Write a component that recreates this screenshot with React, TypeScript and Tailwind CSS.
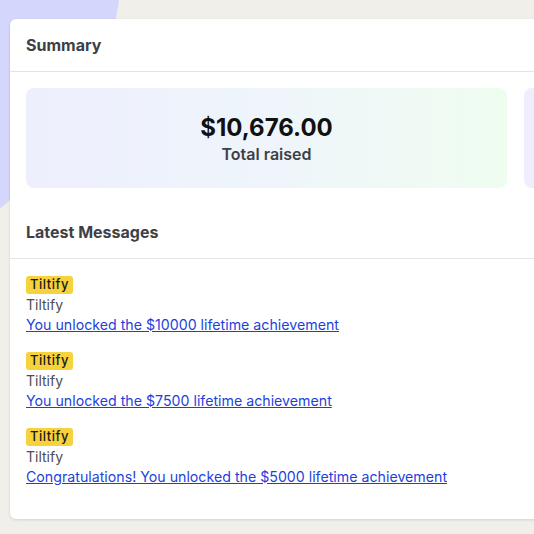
import React from "react";

const messages = [
  "You unlocked the $10000 lifetime achievement",
  "You unlocked the $7500 lifetime achievement",
  "Congratulations! You unlocked the $5000 lifetime achievement",
];

function StatCard({ value, label }: { value: string; label: string }) {
  return (
    <div className="flex h-[100px] w-[481px] shrink-0 flex-col items-center justify-center rounded-lg bg-gradient-to-r from-[#edeffd] via-[#eff5fb] to-[#effdf0]">
      <div className="text-2xl font-bold leading-8 text-[#111111]">{value}</div>
      <div className="text-base font-semibold leading-5 text-[#3f3f46]">{label}</div>
    </div>
  );
}

export default function App() {
  return (
    <div
      className="relative h-[534px] w-[534px] overflow-hidden bg-[#f0efea]"
      style={{ fontFamily: "Inter, 'Noto Sans', sans-serif" }}
    >
      {/* decorative backdrop blob */}
      <div className="absolute left-[-522px] top-[-372px] h-[650px] w-[644px] rounded-full bg-[#d4d6fc]" />

      <div className="relative ml-[10px] mt-[19px] w-[1000px] rounded-md bg-white pb-8 shadow-[0_1px_3px_rgba(0,0,0,0.12)]">
        <div className="flex h-[53px] items-center border-b border-[#e4e4e7] px-4">
          <h2 className="text-base font-bold text-[#3f3f46]">Summary</h2>
        </div>
        <div className="flex gap-[17px] px-4 pt-4">
          <StatCard value="$10,676.00" label="Total raised" />
          <div className="h-[100px] w-[481px] shrink-0 rounded-lg bg-gradient-to-r from-[#efedfe] to-[#f3f0fe]" />
        </div>

        <div className="mt-4 flex h-[55px] items-center border-b border-[#e4e4e7] px-4 pt-[1px]">
          <h2 className="text-base font-bold text-[#3f3f46]">Latest Messages</h2>
        </div>

        <div className="flex flex-col gap-[17px] px-4 pt-[17px]">
          {messages.map((m) => (
            <div key={m} className="flex flex-col items-start">
              <span className="mb-px inline-flex h-[18px] items-center rounded-[3px] bg-[#f6d23c] px-1 text-[13px] font-medium tracking-[0.04em] text-[#1a1a1a]">
                Tiltify
              </span>
              <span className="text-sm leading-5 text-[#4d4d55]">Tiltify</span>
              <a href="#" className="text-[14.2px] leading-5 text-[#1e3fdc] underline">
                {m}
              </a>
            </div>
          ))}
        </div>
      </div>
    </div>
  );
}
